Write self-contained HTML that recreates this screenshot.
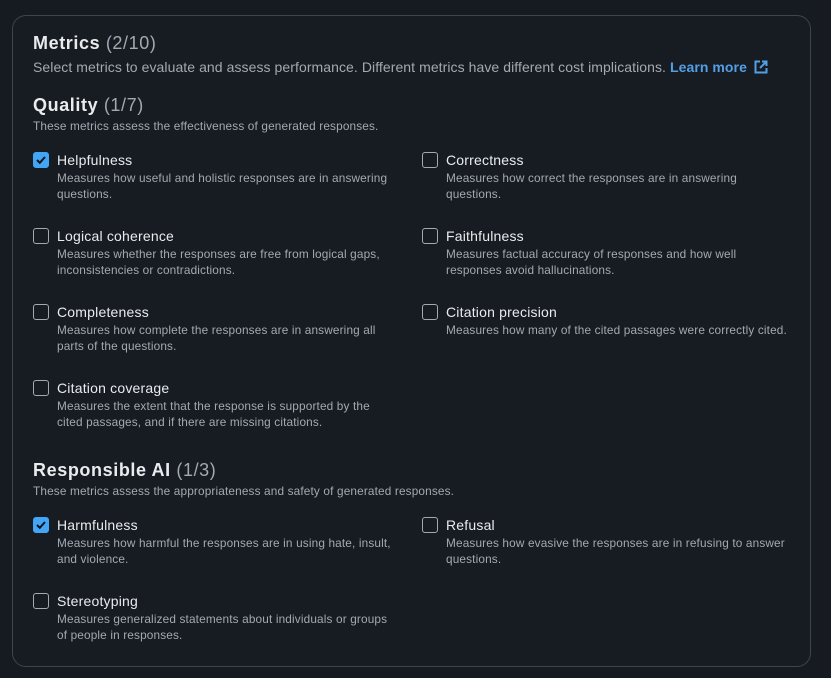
<!DOCTYPE html>
<html><head><meta charset="utf-8"><style>
*{margin:0;padding:0;box-sizing:border-box}
body{width:831px;height:678px;background:#161b22;font-family:"Liberation Sans",sans-serif;position:relative;overflow:hidden}
.panel{position:absolute;left:12px;top:15px;width:799px;height:652px;border:1px solid #3f444d;border-radius:14px;background:#171c23}
.a{position:absolute;white-space:nowrap}
.h1{font-size:18px;font-weight:bold;color:#e9ebed;letter-spacing:0.6px}
.h1 span{font-weight:normal;color:#a4a9b1}
.d14{font-size:14px;color:#a4a9b1;letter-spacing:0.07px}
.d12{font-size:11.8px;color:#a4a9b1;line-height:16px;letter-spacing:0.15px}
.lbl{font-size:14px;color:#e9ebed;letter-spacing:0.2px}
.cb{position:absolute;width:16px;height:16px;border:1.5px solid #a4a9b1;border-radius:3px}
.cb.on{background:#42a5f5;border-color:#42a5f5}
.cb.on svg{position:absolute;left:1px;top:1px}
a{color:#539fe5;text-decoration:none;font-weight:bold}
</style></head><body>
<div class="panel"></div>
<div class="a h1" style="left:33px;top:33px">Metrics <span>(2/10)</span></div>
<div class="a d14" style="left:33px;top:59px">Select metrics to evaluate and assess performance. Different metrics have different cost implications. <a>Learn more</a>
<svg width="14" height="14" viewBox="0 0 14 14" style="vertical-align:-2px;margin-left:3px"><path d="M6 1.5H1.5v11h11V8" fill="none" stroke="#539fe5" stroke-width="2"/><path d="M8 1.5h4.5V6M12.5 1.5 6 8" fill="none" stroke="#539fe5" stroke-width="2"/></svg></div>
<div class="a h1" style="left:33px;top:95px">Quality <span>(1/7)</span></div>
<div class="a d12" style="left:33px;top:118px">These metrics assess the effectiveness of generated responses.</div>

<div class="cb on" style="left:33px;top:152px"><svg width="12" height="12" viewBox="0 0 12 12"><path d="M2 6l2.8 2.8L10 3" fill="none" stroke="#0f141a" stroke-width="2"/></svg></div>
<div class="a lbl" style="left:57px;top:152px">Helpfulness</div>
<div class="a d12" style="left:57px;top:170px">Measures how useful and holistic responses are in answering<br>questions.</div>
<div class="cb" style="left:422px;top:152px"></div>
<div class="a lbl" style="left:446px;top:152px">Correctness</div>
<div class="a d12" style="left:446px;top:170px">Measures how correct the responses are in answering<br>questions.</div>

<div class="cb" style="left:33px;top:228px"></div>
<div class="a lbl" style="left:57px;top:228px">Logical coherence</div>
<div class="a d12" style="left:57px;top:246px">Measures whether the responses are free from logical gaps,<br>inconsistencies or contradictions.</div>
<div class="cb" style="left:422px;top:228px"></div>
<div class="a lbl" style="left:446px;top:228px">Faithfulness</div>
<div class="a d12" style="left:446px;top:246px">Measures factual accuracy of responses and how well<br>responses avoid hallucinations.</div>

<div class="cb" style="left:33px;top:304px"></div>
<div class="a lbl" style="left:57px;top:304px">Completeness</div>
<div class="a d12" style="left:57px;top:322px">Measures how complete the responses are in answering all<br>parts of the questions.</div>
<div class="cb" style="left:422px;top:304px"></div>
<div class="a lbl" style="left:446px;top:304px">Citation precision</div>
<div class="a d12" style="left:446px;top:322px">Measures how many of the cited passages were correctly cited.</div>

<div class="cb" style="left:33px;top:380px"></div>
<div class="a lbl" style="left:57px;top:380px">Citation coverage</div>
<div class="a d12" style="left:57px;top:398px">Measures the extent that the response is supported by the<br>cited passages, and if there are missing citations.</div>

<div class="a h1" style="left:33px;top:460px">Responsible AI <span>(1/3)</span></div>
<div class="a d12" style="left:33px;top:483px">These metrics assess the appropriateness and safety of generated responses.</div>

<div class="cb on" style="left:33px;top:517px"><svg width="12" height="12" viewBox="0 0 12 12"><path d="M2 6l2.8 2.8L10 3" fill="none" stroke="#0f141a" stroke-width="2"/></svg></div>
<div class="a lbl" style="left:57px;top:517px">Harmfulness</div>
<div class="a d12" style="left:57px;top:535px">Measures how harmful the responses are in using hate, insult,<br>and violence.</div>
<div class="cb" style="left:422px;top:517px"></div>
<div class="a lbl" style="left:446px;top:517px">Refusal</div>
<div class="a d12" style="left:446px;top:535px">Measures how evasive the responses are in refusing to answer<br>questions.</div>

<div class="cb" style="left:33px;top:593px"></div>
<div class="a lbl" style="left:57px;top:593px">Stereotyping</div>
<div class="a d12" style="left:57px;top:611px">Measures generalized statements about individuals or groups<br>of people in responses.</div>
</body></html>
